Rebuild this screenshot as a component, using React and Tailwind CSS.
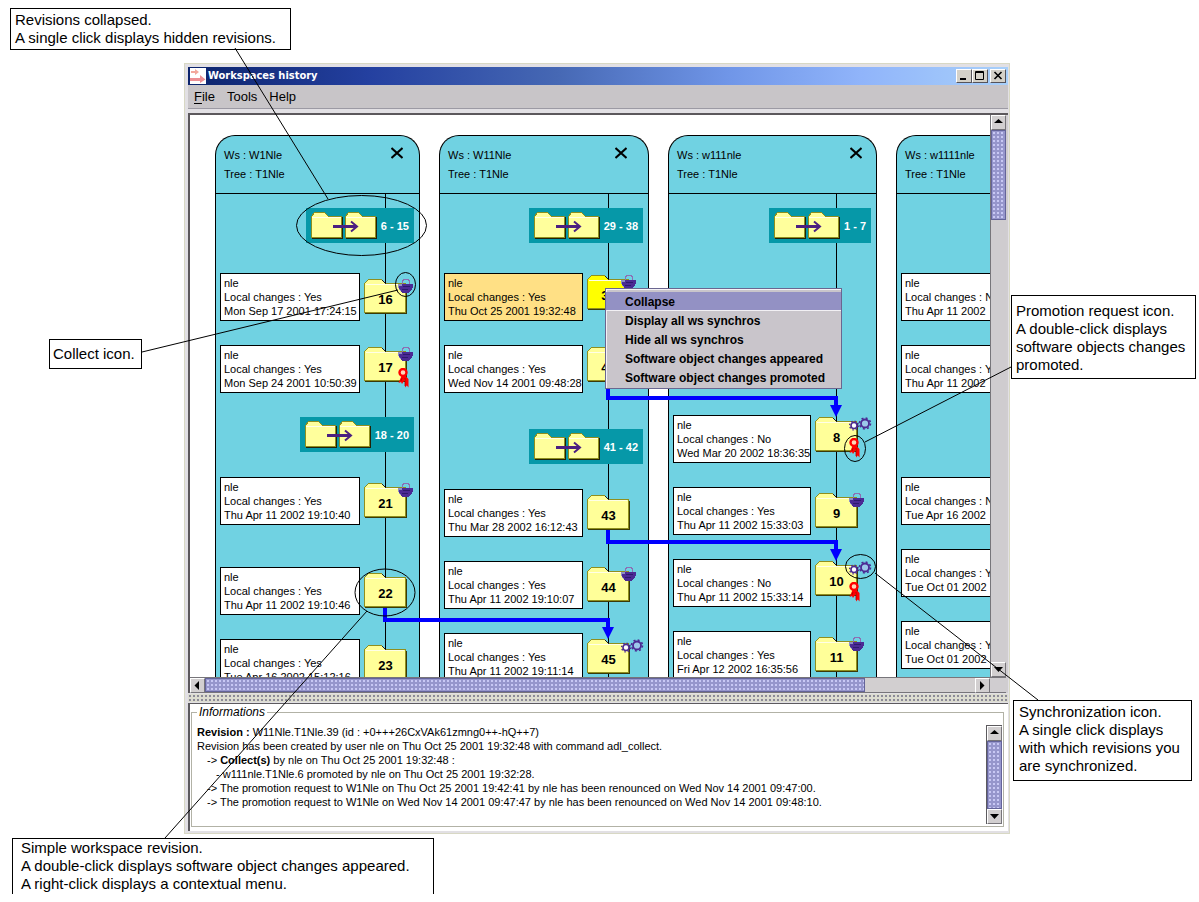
import React from "react";

const LANES = [
  {
    ws: "W1Nle",
    tree: "T1Nle",
    width: 205,
    line: 169,
    closeInset: 16,
    groups: [
      { y: 72, label: "6 - 15" },
      { y: 281, label: "18 - 20" },
    ],
    nodes: [
      { y: 137, drop: 6, id: "16", local: "Yes", date: "Mon Sep 17 2001 17:24:15", icons: ["bag"] },
      { y: 209, drop: 2, id: "17", local: "Yes", date: "Mon Sep 24 2001 10:50:39", icons: ["bag", "ribbon"] },
      { y: 341, drop: 6, id: "21", local: "Yes", date: "Thu Apr 11 2002 19:10:40", icons: ["bag"] },
      { y: 431, drop: 6, id: "22", local: "Yes", date: "Thu Apr 11 2002 19:10:46", icons: [] },
      { y: 503, drop: 6, id: "23", local: "Yes", date: "Tue Apr 16 2002 15:12:16", icons: [] },
    ],
  },
  {
    ws: "W11Nle",
    tree: "T1Nle",
    width: 210,
    line: 168,
    closeInset: 21,
    groups: [
      { y: 72, label: "29 - 38" },
      { y: 293, label: "41 - 42" },
    ],
    nodes: [
      { y: 137, drop: 2, id: "39", local: "Yes", date: "Thu Oct 25 2001 19:32:48", icons: ["bag"], selected: true },
      { y: 209, drop: 2, id: "40", local: "Yes", date: "Wed Nov 14 2001 09:48:28", icons: [] },
      { y: 353, drop: 6, id: "43", local: "Yes", date: "Thu Mar 28 2002 16:12:43", icons: [] },
      { y: 425, drop: 6, id: "44", local: "Yes", date: "Thu Apr 11 2002 19:10:07", icons: ["bag"] },
      { y: 497, drop: 6, id: "45", local: "Yes", date: "Thu Apr 11 2002 19:11:14", icons: ["gears"] },
    ],
  },
  {
    ws: "w111nle",
    tree: "T1Nle",
    width: 209,
    line: 167,
    closeInset: 14,
    groups: [{ y: 72, label: "1 - 7" }],
    nodes: [
      { y: 279, drop: 2, id: "8", local: "No", date: "Wed Mar 20 2002 18:36:35", icons: ["gears", "ribbon"] },
      { y: 351, drop: 6, id: "9", local: "Yes", date: "Thu Apr 11 2002 15:33:03", icons: ["bag"] },
      { y: 423, drop: 2, id: "10", local: "No", date: "Thu Apr 11 2002 15:33:14", icons: ["gears", "ribbon"] },
      { y: 495, drop: 6, id: "11", local: "Yes", date: "Fri Apr 12 2002 16:35:56", icons: ["bag"] },
    ],
  },
  {
    ws: "w1111nle",
    tree: "T1Nle",
    width: 210,
    line: 168,
    groups: [],
    nodes: [
      { y: 137, drop: 6, id: "", local: "No", date: "Thu Apr 11 2002", icons: [] },
      { y: 209, drop: 6, id: "", local: "Yes", date: "Thu Apr 11 2002", icons: [] },
      { y: 341, drop: 6, id: "", local: "No", date: "Tue Apr 16 2002", icons: [] },
      { y: 413, drop: 6, id: "", local: "Yes", date: "Tue Oct 01 2002", icons: [] },
      { y: 485, drop: 6, id: "", local: "Yes", date: "Tue Oct 01 2002", icons: [] },
    ],
  },
];

const MENU_ITEMS = [
  "Collapse",
  "Display all ws synchros",
  "Hide all ws synchros",
  "Software object changes appeared",
  "Software object changes promoted",
];

function Bag() {
  return (
    <svg className="absolute left-[34px] top-0" width="16" height="14" viewBox="0 0 16 14" shapeRendering="crispEdges" aria-hidden="true">
      <path d="M4.5 6V2.5L5.5 0.5H10.5L11.5 2.5V6" fill="none" stroke="#8c6fb4" />
      <path d="M0 5H15V8L13 12L11 13.5H4L2 12L0 8Z" fill="#4b2a94" />
      <path d="M0 5H4V7H1V9L3 12H2L0 8Z" fill="#8d8fc4" />
      <path d="M5 7H12V8H5ZM4 10H10V11H4Z" fill="#2d1a6e" />
    </svg>
  );
}

function Ribbon() {
  return (
    <svg className="absolute left-[34px] top-[21px]" width="12" height="20" viewBox="0 0 12 20" aria-hidden="true">
      <circle cx="5" cy="4.5" r="3.5" fill="#ffd6b8" stroke="#f00" strokeWidth="2.4" />
      <path d="M3.5 8L7 7.5L10.5 11V19.5L8.8 17.5L7 19.5V11.5L4 16L3 14L0.5 15Z" fill="#f00" />
      <path d="M7 10V18M4 10L3 13" stroke="#a80000" strokeWidth="0.8" fill="none" />
    </svg>
  );
}

function Gears() {
  return (
    <svg className="absolute left-[34px] top-0" width="23" height="14" viewBox="0 0 23 14" fill="none" stroke="#4c2a94" aria-hidden="true">
      <circle cx="5" cy="8.5" r="3" fill="#fff" strokeWidth="1.6" />
      <circle cx="5" cy="8.5" r="4.4" strokeWidth="1.4" strokeDasharray="1.5 1.96" />
      <circle cx="16" cy="6.5" r="4" fill="#9cc8ea" strokeWidth="1.8" />
      <circle cx="16" cy="6.5" r="5.5" strokeWidth="1.6" strokeDasharray="2 2.32" />
    </svg>
  );
}

function Folder({ fill }) {
  return (
    <svg className="absolute inset-0" width="43" height="35" viewBox="0 0 43 35" shapeRendering="crispEdges" aria-hidden="true">
      <path d="M0.5 33.5V4.5L4.5 0.5H17.5L21.5 4.5H41.5V33.5Z" fill={fill} stroke="#8f8f1e" />
      <path d="M42 6V34H1" fill="none" stroke="#3a3a08" />
      <path d="M1.5 5.5H40" stroke="#ffffe6" />
      <path d="M18 1L22 5" stroke="#222" />
    </svg>
  );
}

function Icons({ names }) {
  return (
    <>
      {names.includes("bag") && <Bag />}
      {names.includes("gears") && <Gears />}
      {names.includes("ribbon") && <Ribbon />}
    </>
  );
}

function RevisionNode({ node, line }) {
  return (
    <li className="absolute left-1 flex items-start gap-1" style={{ top: node.y, width: line + 18 }}>
      <div
        className={
          "h-12 min-w-0 flex-1 overflow-hidden whitespace-nowrap border border-black px-[3px] pt-[2px] " +
          (node.selected ? "bg-[#ffe085]" : "bg-white")
        }
      >
        <p>nle</p>
        <p>Local changes : {node.local}</p>
        <p>{node.date}</p>
      </div>
      <button
        type="button"
        className="relative h-[35px] w-[43px] shrink-0 pt-[6px] text-[13px] font-bold"
        style={{ marginTop: node.drop }}
        aria-label={"Revision " + node.id}
      >
        <Folder fill={node.selected ? "#ffff00" : "#ffff99"} />
        <span className="relative">{node.id}</span>
        <Icons names={node.icons} />
      </button>
    </li>
  );
}

function CollapsedGroup({ group }) {
  return (
    <li className="absolute right-[5px]" style={{ top: group.y }}>
      <button
        type="button"
        className="flex h-[35px] items-center gap-1 whitespace-nowrap bg-[#0698a8] px-[5px] text-[11px] font-bold text-white"
      >
        <svg width="66" height="27" viewBox="0 0 66 27" shapeRendering="crispEdges" aria-hidden="true">
          {[0, 34].map((x) => (
            <g key={x} transform={`translate(${x} 0)`}>
              <path d="M0.5 25.5V4.5L3.5 0.5H13.5L17.5 4.5H30.5V25.5Z" fill="#ffff9c" stroke="#8f8f1e" />
              <path d="M31 5V26H1" fill="none" stroke="#222208" />
              <path d="M1 5.5H30" stroke="#ffffe8" />
            </g>
          ))}
          <path d="M22 13H45V16H22Z" fill="#4c2080" />
          <path d="M40 9.5L46 14.5L40 19.5" fill="none" stroke="#4c2080" strokeWidth="2" shapeRendering="auto" />
        </svg>
        {group.label}
      </button>
    </li>
  );
}

function Lane({ lane, last }) {
  return (
    <section
      className="relative shrink-0 rounded-t-[20px] border border-b-0 border-black bg-[#70d2e2]"
      style={{ width: lane.width }}
    >
      <header
        className="flex h-[58px] items-start justify-between border-b border-black pl-2 pt-[10px] leading-[19px]"
        style={{ paddingRight: lane.closeInset }}
      >
        <div>
          <p>Ws : {lane.ws}</p>
          <p>Tree : {lane.tree}</p>
        </div>
        {!last && (
          <button type="button" aria-label="Close workspace">
            <svg width="12" height="14" viewBox="0 0 12 14" aria-hidden="true">
              <path d="M0.5 2L11.5 12M11.5 2L0.500 12" stroke="#000" strokeWidth="2" />
            </svg>
          </button>
        )}
      </header>
      <div className="absolute bottom-0 top-[58px] w-px bg-black" style={{ left: lane.line }} />
      <ul>
        {lane.groups.map((g) => (
          <CollapsedGroup key={g.label} group={g} />
        ))}
        {lane.nodes.map((n) => (
          <RevisionNode key={n.y} node={n} line={lane.line} />
        ))}
      </ul>
    </section>
  );
}

const ARROWS = {
  up: "M3 8H12L7.5 4Z",
  down: "M3 5H12L7.5 10Z",
  left: "M9 3V12L4.5 7.5Z",
  right: "M5 3V12L9.5 7.5Z",
};

function ScrollButton({ dir }) {
  return (
    <button
      type="button"
      aria-label={"Scroll " + dir}
      className="size-[15px] shrink-0 border border-[#77757a] border-l-white border-t-white bg-[#d2cfd0]"
    >
      <svg className="-ml-px -mt-px" width="15" height="15" viewBox="0 0 15 15" aria-hidden="true">
        <path d={ARROWS[dir]} fill="#000" />
      </svg>
    </button>
  );
}

const THUMB =
  "border border-[#64649a] bg-[#9696cc] bg-[radial-gradient(#c8c8f4_1px,transparent_1px)] bg-[length:4px_4px] ";

function Callout({ className, children }) {
  return (
    <div className={"absolute whitespace-nowrap border border-black bg-white text-[15px] leading-[18px] " + className}>
      {children}
    </div>
  );
}

function Info() {
  return (
    <section className="h-[128px] shrink-0 border-l-2 border-t border-[#5c5a5e] bg-white pr-[3px] pt-[1px]">
      <fieldset className="mx-px h-[122px] border border-[#b2b2a6] pl-[5px] pr-[1px]">
        <legend className="h-[14px] px-[2px] text-[12px] italic leading-[14px]">Informations</legend>
        <div className="flex pt-[6px]">
          <div className="min-w-0 flex-1 whitespace-pre text-[11px] leading-[14px]">
            <p><b>Revision :</b> W11Nle.T1Nle.39 (id : +0+++26CxVAk61zmng0++-hQ++7)</p>
            <p>Revision has been created by user nle on Thu Oct 25 2001 19:32:48 with command adl_collect.</p>
            <p className="pl-[10px]">{"-> "}<b>Collect(s)</b> by nle on Thu Oct 25 2001 19:32:48 :</p>
            <p className="pl-[19px]">- w111nle.T1Nle.6 promoted by nle on Thu Oct 25 2001 19:32:28.</p>
            <p className="pl-[10px]">{"-> The promotion request to W1Nle on Thu Oct 25 2001 19:42:41 by nle has been renounced on Wed Nov 14 2001 09:47:00."}</p>
            <p className="pl-[10px]">{"-> The promotion request to W1Nle on Wed Nov 14 2001 09:47:47 by nle has been renounced on Wed Nov 14 2001 09:48:10."}</p>
          </div>
          <div className="flex h-[99px] w-4 flex-col border-l border-t border-[#5c5a5e]">
            <ScrollButton dir="up" />
            <div className={THUMB + "flex-1"} />
            <ScrollButton dir="down" />
          </div>
        </div>
      </fieldset>
    </section>
  );
}

function TitleButton({ label, className, children }) {
  return (
    <button
      type="button"
      aria-label={label}
      className={
        "h-[14px] w-4 border border-[#55535a] border-l-white border-t-white bg-[#d4d1c8] " + className
      }
    >
      <svg width="14" height="12" viewBox="0 0 14 12" fill="none" stroke="#000" aria-hidden="true">
        {children}
      </svg>
    </button>
  );
}

export default function App() {
  return (
    <main className="relative flex h-screen min-h-[902px] flex-col overflow-hidden bg-white pb-[68px] pl-[184px] pr-[189px] pt-[63px] font-['Liberation_Sans',Arial,sans-serif] text-[11px] leading-[14px] text-black">
      <div className="flex min-h-0 flex-1 flex-col border border-[#d8d8c4] bg-[#e2e0e4] pb-[2px] pl-[3px] pr-[1px] pt-[3px]">
        <div className="flex h-[18px] shrink-0 items-center bg-[linear-gradient(90deg,#0c246c_0%,#2440a0_22%,#4668b4_45%,#7096e8_66%,#90b4fa_82%,#a8d0fa_100%)] pl-[2px] pr-[2px]">
          <svg className="bg-white" width="16" height="16" viewBox="0 0 16 16" aria-hidden="true">
            <path d="M1 3H5V1L9 4L5 7V5H1Z" fill="#f2a79c" />
            <path d="M0 10H10V7L15.500 11.500L10 15V13H0Z" fill="#ec8f94" />
          </svg>
          <h1 className="flex-1 pl-[2px] font-['DejaVu_Sans_Condensed','DejaVu_Sans',sans-serif] text-[11px] font-bold text-white">
            Workspaces history
          </h1>
          <TitleButton label="Minimize" className=""><path d="M3 9H9" strokeWidth="2" /></TitleButton>
          <TitleButton label="Maximize" className=""><path d="M2.500 1.500H10.500V9.500H2.500ZM2 2.500H11" /></TitleButton>
          <TitleButton label="Close" className="ml-[2px]"><path d="M3.500 2L10.500 9M10.500 2L3.500 9" strokeWidth="1.6" /></TitleButton>
        </div>

        <nav className="flex h-6 shrink-0 items-center gap-3 border-b border-[#9c9aa4] bg-[#c8c5c8] pl-[6px] text-[13px]">
          <button type="button"><u className="underline-offset-2">F</u>ile</button>
          <button type="button">Tools</button>
          <button type="button">Help</button>
        </nav>

        <div className="mt-1 flex min-h-0 flex-1 flex-col border-l-2 border-t-2 border-[#5c585c] bg-[#d0cdd0] pr-[2px]">
          <div className="flex min-h-0 flex-1">
            <div className="relative min-w-0 flex-1 overflow-hidden bg-white">
              <div className="flex h-full gap-[19px] pl-[25px] pt-5">
                {LANES.map((lane, i) => (
                  <Lane key={lane.ws} lane={lane} last={i === LANES.length - 1} />
                ))}
              </div>

              <svg className="pointer-events-none absolute left-0 top-0" width="800" height="562" viewBox="0 0 800 562" aria-hidden="true">
                <g fill="none" stroke="#0000ff" strokeWidth="4">
                  <path d="M418 268V283H646V292" />
                  <path d="M418 415V427H646V436" />
                  <path d="M195 493V505H418V514" />
                </g>
                <g fill="#0000ff">
                  <path d="M640 290H652L646 302Z" />
                  <path d="M640 434H652L646 446Z" />
                  <path d="M412 512H424L418 524Z" />
                </g>
              </svg>

              <div role="menu" className="absolute left-[415px] top-[173px] w-[237px] border border-[#6a6690] bg-[#c9c5cb] pb-[1px] pt-[3px] shadow-[inset_1px_1px_0_#f4f2f6]">
                {MENU_ITEMS.map((item, i) => (
                  <button
                    key={item}
                    type="button"
                    role="menuitem"
                    className={
                      "block h-[19px] w-full pl-[19px] text-left text-[12px] font-bold " +
                      (i === 0 ? "bg-[#9391c4] shadow-[inset_0_-1px_0_#f2f0f4]" : "")
                    }
                  >
                    {item}
                  </button>
                ))}
              </div>
            </div>
            <div className="flex w-4 flex-col border-l border-[#77757a] bg-[#cfcccf]">
              <ScrollButton dir="up" />
              <div className="min-h-0 flex-1">
                <div className={THUMB + "h-[17%]"} />
              </div>
              <ScrollButton dir="down" />
            </div>
          </div>
          <div className="flex h-4 shrink-0 border-b border-t border-[#77757a] pr-4">
            <ScrollButton dir="left" />
            <div className="min-w-0 flex-1 bg-[#d2cfd0]">
              <div className={THUMB + "h-full w-6/7"} />
            </div>
            <ScrollButton dir="right" />
          </div>
        </div>

        <div className="my-[1px] h-[8px] shrink-0 bg-[#dcdcd0] bg-[radial-gradient(#8c8a98_1px,transparent_1px)] bg-[length:4px_4px]" />

        <Info />
      </div>

      <Callout className="left-[10px] top-[8px] w-[281px] px-1 py-[2px]">
        <p>Revisions collapsed.</p>
        <p>A single click displays hidden revisions.</p>
      </Callout>
      <Callout className="left-[49px] top-[339px] w-[93px] px-[3px] py-[5px]">
        <p>Collect icon.</p>
      </Callout>
      <Callout className="left-[1011px] top-[295px] h-[84px] w-[185px] px-1 py-[6px]">
        <p>Promotion request icon.</p>
        <p>A double-click displays</p>
        <p>software objects changes</p>
        <p>promoted.</p>
      </Callout>
      <Callout className="left-[1013px] top-[700px] h-[81px] w-[179px] px-[5px] py-[2px]">
        <p>Synchronization icon.</p>
        <p>A single click displays</p>
        <p>with which revisions you</p>
        <p>are synchronized.</p>
      </Callout>
      <Callout className="left-[12px] top-[838px] w-[422px] border-b-0 px-2 pb-[1px]">
        <p>Simple workspace revision.</p>
        <p>A double-click displays software object changes appeared.</p>
        <p>A right-click displays a contextual menu.</p>
      </Callout>

      <svg className="pointer-events-none absolute inset-0 h-full w-full" fill="none" stroke="#000" aria-hidden="true">
        <ellipse cx="361.500" cy="225.500" rx="65" ry="30" />
        <ellipse cx="405.500" cy="284.500" rx="10" ry="12" />
        <ellipse cx="855" cy="448.500" rx="10.500" ry="13" />
        <ellipse cx="385" cy="592.500" rx="30" ry="23.500" />
        <ellipse cx="860.500" cy="566.500" rx="15" ry="12" />
        <path d="M235 48L328 199M142 352L398 290M1011 367L865 442M875 573L1038 700M367 611L165 838" />
      </svg>
    </main>
  );
}
